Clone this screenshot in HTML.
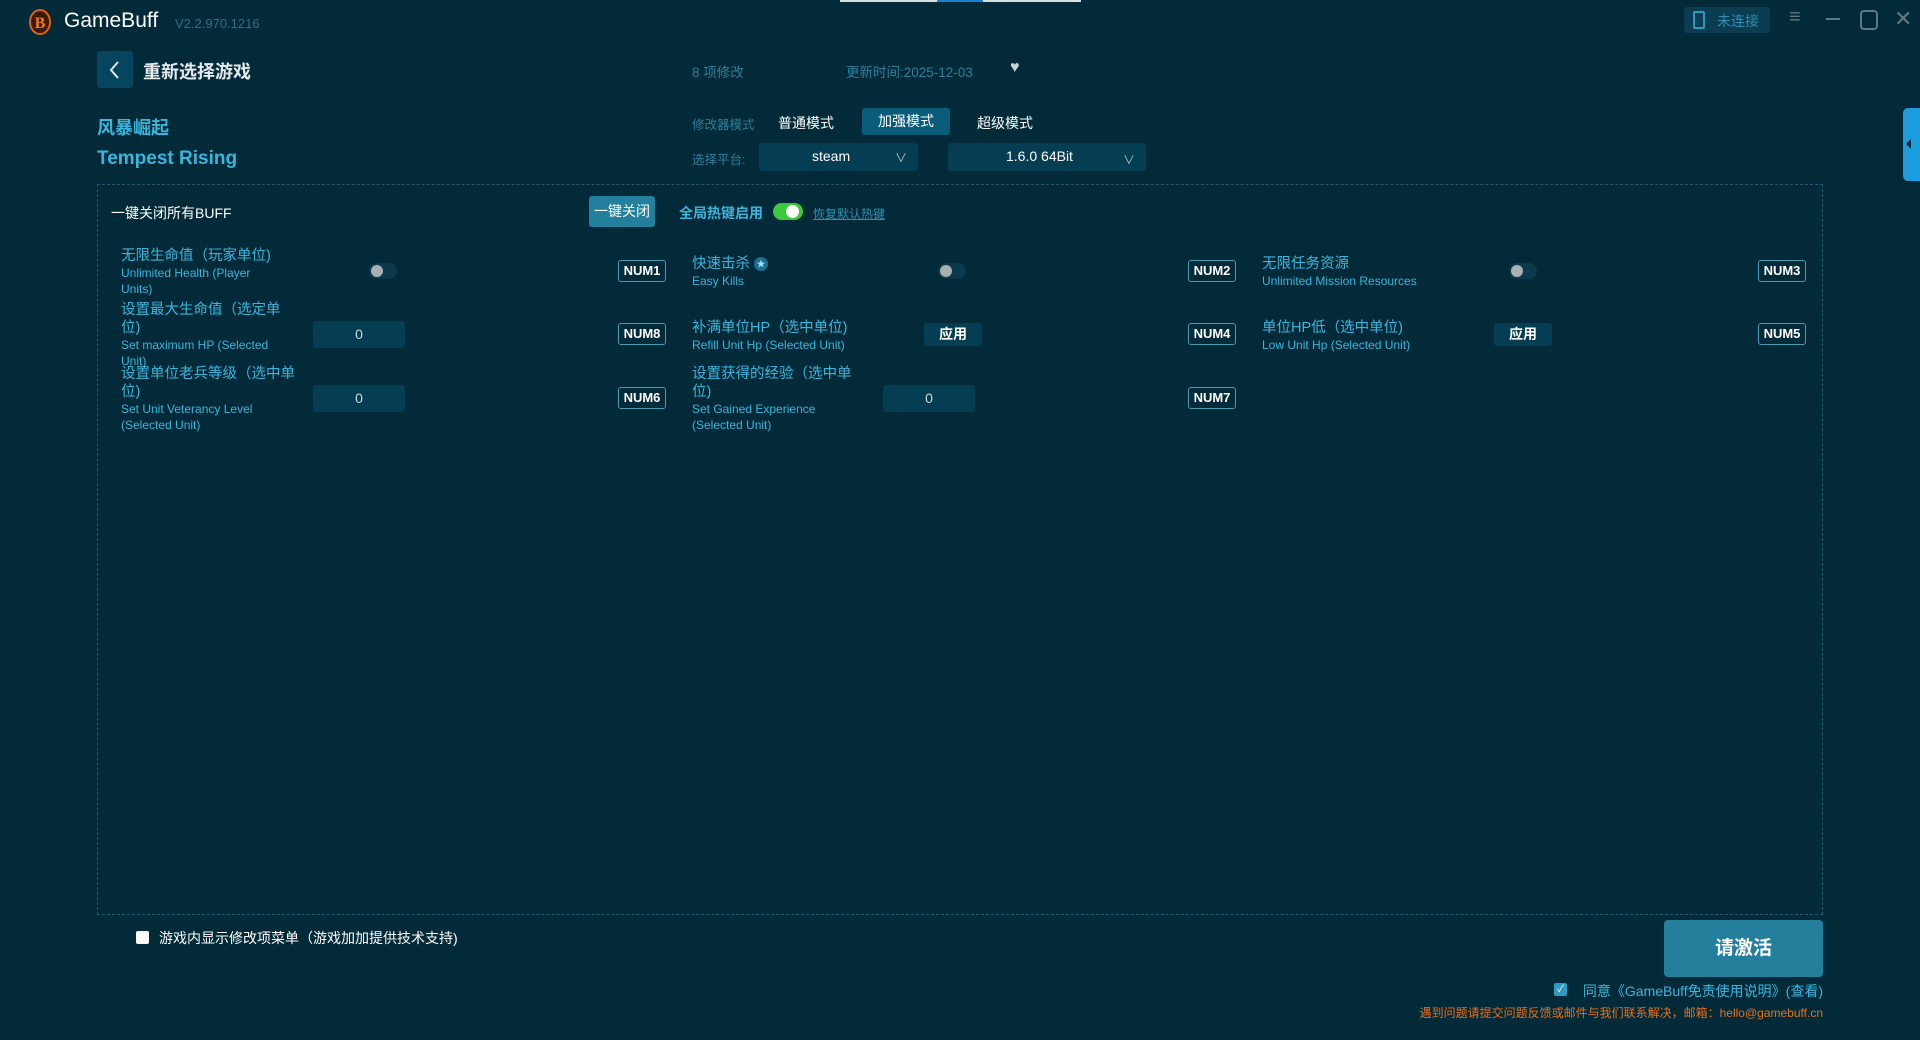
<!DOCTYPE html>
<html><head><meta charset="utf-8"><style>
*{margin:0;padding:0;box-sizing:border-box}
body{width:1920px;height:1040px;background:#022a38;font-family:"Liberation Sans","Noto Sans CJK SC",sans-serif;color:#fff;position:relative;overflow:hidden}
.a{position:absolute;white-space:nowrap}
.c{color:#3ab6dc}
.m{color:#2e7f9a}
.cn{font-size:14.5px;color:#3ab6dc;line-height:18px}
.en{font-size:12px;color:#3ab6dc;line-height:16px}
.num{position:absolute;width:48px;height:22px;border:1px solid #4a9ab3;border-radius:3px;font-size:13px;font-weight:bold;color:#fff;text-align:center;line-height:20px}
.tg{position:absolute;width:28px;height:16px;border-radius:8px;background:#0a3a4b}
.tg:after{content:"";position:absolute;left:2px;top:2px;width:12px;height:12px;border-radius:6px;background:#a8b0b4}
.inp{position:absolute;width:92px;height:27px;background:#053d52;border-radius:3px;text-align:center;line-height:27px;font-size:14px;color:#c8d8de}
.btn{position:absolute;width:58px;height:23px;background:#053d52;border-radius:3px;text-align:center;line-height:23px;font-size:14px;font-weight:bold;color:#fff}
</style></head><body>
<div class="a" style="left:840px;top:0;width:241px;height:2px;background:#d8e0e4"></div>
<div class="a" style="left:937px;top:0;width:46px;height:2px;background:#1a7fd0"></div>
<svg class="a" style="left:27px;top:8px" width="26" height="28" viewBox="0 0 26 28"><ellipse cx="13" cy="14" rx="10" ry="12" fill="#3a1a08" stroke="#e0601a" stroke-width="2"/><text x="13" y="20" font-size="16" font-weight="bold" fill="#f07a20" text-anchor="middle" font-family="Liberation Serif">B</text></svg>
<div class="a" style="left:64px;top:9px;font-size:21px;color:#fff">GameBuff</div>
<div class="a m" style="left:175px;top:16px;font-size:13px;color:#2e6f88">V2.2.970.1216</div>
<div class="a" style="left:1684px;top:7px;width:86px;height:26px;background:#0a3d52;border-radius:3px"></div>
<div class="a" style="left:1693px;top:11px;width:12px;height:18px;border:2px solid #2e9ac0;border-radius:2px"></div>
<div class="a" style="left:1717px;top:11px;font-size:14px;color:#2e8fb2">未连接</div>
<div class="a" style="left:1789px;top:6px;font-size:20px;color:#607880">≡</div>
<div class="a" style="left:1826px;top:18px;width:14px;height:2px;background:#607880"></div>
<div class="a" style="left:1860px;top:10px;width:18px;height:20px;border:2px solid #607880;border-radius:4px"></div>
<div class="a" style="left:1894px;top:6px;font-size:22px;color:#607880">✕</div>
<div class="a" style="left:97px;top:51px;width:36px;height:37px;background:#05465e;border-radius:3px"></div>
<svg class="a" style="left:106px;top:59px" width="18" height="22"><path d="M12 3L5 11L12 19" stroke="#e0e8ec" stroke-width="2" fill="none"/></svg>
<div class="a" style="left:143px;top:58px;font-size:18px;font-weight:bold;color:#e4eaee">重新选择游戏</div>
<div class="a m" style="left:692px;top:61px;font-size:13.5px;color:#2e7f9a">8 项修改</div>
<div class="a m" style="left:846px;top:61px;font-size:13.5px;color:#2e7f9a">更新时间:2025-12-03</div>
<div class="a" style="left:1010px;top:59px;font-size:16px;color:#c8d4d8">♥</div>
<div class="a c" style="left:97px;top:114px;font-size:18px;font-weight:bold">风暴崛起</div>
<div class="a c" style="left:97px;top:148px;font-size:19px;font-weight:bold">Tempest Rising</div>
<div class="a m" style="left:692px;top:114px;font-size:12.5px">修改器模式</div>
<div class="a" style="left:778px;top:113px;font-size:14px">普通模式</div>
<div class="a" style="left:862px;top:108px;width:88px;height:27px;background:#0a5c7a;border-radius:3px;text-align:center;line-height:27px;font-size:14px">加强模式</div>
<div class="a" style="left:977px;top:113px;font-size:14px">超级模式</div>
<div class="a m" style="left:692px;top:149px;font-size:12.5px">选择平台:</div>
<div class="a" style="left:759px;top:143px;width:159px;height:28px;background:#053d52;border-radius:3px"></div>
<div class="a" style="left:812px;top:148px;font-size:14px">steam</div>
<div class="a" style="left:895px;top:149px;font-size:12px;color:#b0c0c6">∨</div>
<div class="a" style="left:948px;top:143px;width:198px;height:28px;background:#053d52;border-radius:3px"></div>
<div class="a" style="left:1006px;top:148px;font-size:14px">1.6.0 64Bit</div>
<div class="a" style="left:1123px;top:151px;font-size:12px;color:#b0c0c6">∨</div>
<div class="a" style="left:97px;top:184px;width:1726px;height:731px;border:1px dashed #1e5b70"></div>
<div class="a" style="left:111px;top:203px;font-size:14px">一键关闭所有BUFF</div>
<div class="a" style="left:589px;top:196px;width:66px;height:31px;background:#237f9c;border-radius:3px;text-align:center;line-height:31px;font-size:14px">一键关闭</div>
<div class="a c" style="left:679px;top:203px;font-size:14px;font-weight:bold">全局热键启用</div>
<div class="a" style="left:773px;top:203px;width:30px;height:17px;border-radius:9px;background:#3cc83c"></div>
<div class="a" style="left:786px;top:205px;width:13px;height:13px;border-radius:7px;background:#fff"></div>
<div class="a" style="left:813px;top:205px;font-size:12px;color:#2e8fb2;text-decoration:underline">恢复默认热键</div>

<div class="a" style="left:121px;top:247px"><div class="cn">无限生命值（玩家单位)</div><div class="en">Unlimited Health (Player<br>Units)</div></div>
<div class="tg" style="left:369px;top:263px"></div>
<div class="num" style="left:618px;top:260px">NUM1</div>
<div class="a" style="left:692px;top:255px"><div class="cn">快速击杀 <span style="display:inline-block;width:14px;height:14px;border-radius:7px;background:#1a6f90;color:#9fe0ff;font-size:9px;text-align:center;line-height:14px;vertical-align:middle">★</span></div><div class="en">Easy Kills</div></div>
<div class="tg" style="left:938px;top:263px"></div>
<div class="num" style="left:1188px;top:260px">NUM2</div>
<div class="a" style="left:1262px;top:255px"><div class="cn">无限任务资源</div><div class="en">Unlimited Mission Resources</div></div>
<div class="tg" style="left:1509px;top:263px"></div>
<div class="num" style="left:1758px;top:260px">NUM3</div>

<div class="a" style="left:121px;top:301px"><div class="cn">设置最大生命值（选定单<br>位)</div><div class="en">Set maximum HP (Selected<br>Unit)</div></div>
<div class="inp" style="left:313px;top:321px">0</div>
<div class="num" style="left:618px;top:323px">NUM8</div>
<div class="a" style="left:692px;top:319px"><div class="cn">补满单位HP（选中单位)</div><div class="en">Refill Unit Hp (Selected Unit)</div></div>
<div class="btn" style="left:924px;top:323px">应用</div>
<div class="num" style="left:1188px;top:323px">NUM4</div>
<div class="a" style="left:1262px;top:319px"><div class="cn">单位HP低（选中单位)</div><div class="en">Low Unit Hp (Selected Unit)</div></div>
<div class="btn" style="left:1494px;top:323px">应用</div>
<div class="num" style="left:1758px;top:323px">NUM5</div>

<div class="a" style="left:121px;top:365px"><div class="cn">设置单位老兵等级（选中单<br>位)</div><div class="en">Set Unit Veterancy Level<br>(Selected Unit)</div></div>
<div class="inp" style="left:313px;top:385px">0</div>
<div class="num" style="left:618px;top:387px">NUM6</div>
<div class="a" style="left:692px;top:365px"><div class="cn">设置获得的经验（选中单<br>位)</div><div class="en">Set Gained Experience<br>(Selected Unit)</div></div>
<div class="inp" style="left:883px;top:385px">0</div>
<div class="num" style="left:1188px;top:387px">NUM7</div>

<div class="a" style="left:136px;top:931px;width:13px;height:13px;background:#fff;border-radius:2px"></div>
<div class="a" style="left:159px;top:928px;font-size:14px">游戏内显示修改项菜单（游戏加加提供技术支持)</div>
<div class="a" style="left:1664px;top:920px;width:159px;height:57px;background:#237f9c;border-radius:4px;text-align:center;line-height:57px;font-size:19px;font-weight:bold">请激活</div>
<div class="a" style="left:1554px;top:983px;width:13px;height:13px;background:#2e9ac0;border-radius:2px;font-size:10px;text-align:center;line-height:13px">✓</div>
<div class="a c" style="right:97px;top:981px;font-size:14px">同意《GameBuff免责使用说明》(查看)</div>
<div class="a" style="right:97px;top:1004px;font-size:12px;color:#e8701a">遇到问题请提交问题反馈或邮件与我们联系解决，邮箱：hello@gamebuff.cn</div>
<div class="a" style="left:1903px;top:108px;width:17px;height:73px;background:#1a9ee0;border-radius:5px 0 0 5px"></div>
<div class="a" style="left:1906px;top:139px;width:0;height:0;border-top:5px solid transparent;border-bottom:5px solid transparent;border-right:5px solid #022a38"></div>
</body></html>
